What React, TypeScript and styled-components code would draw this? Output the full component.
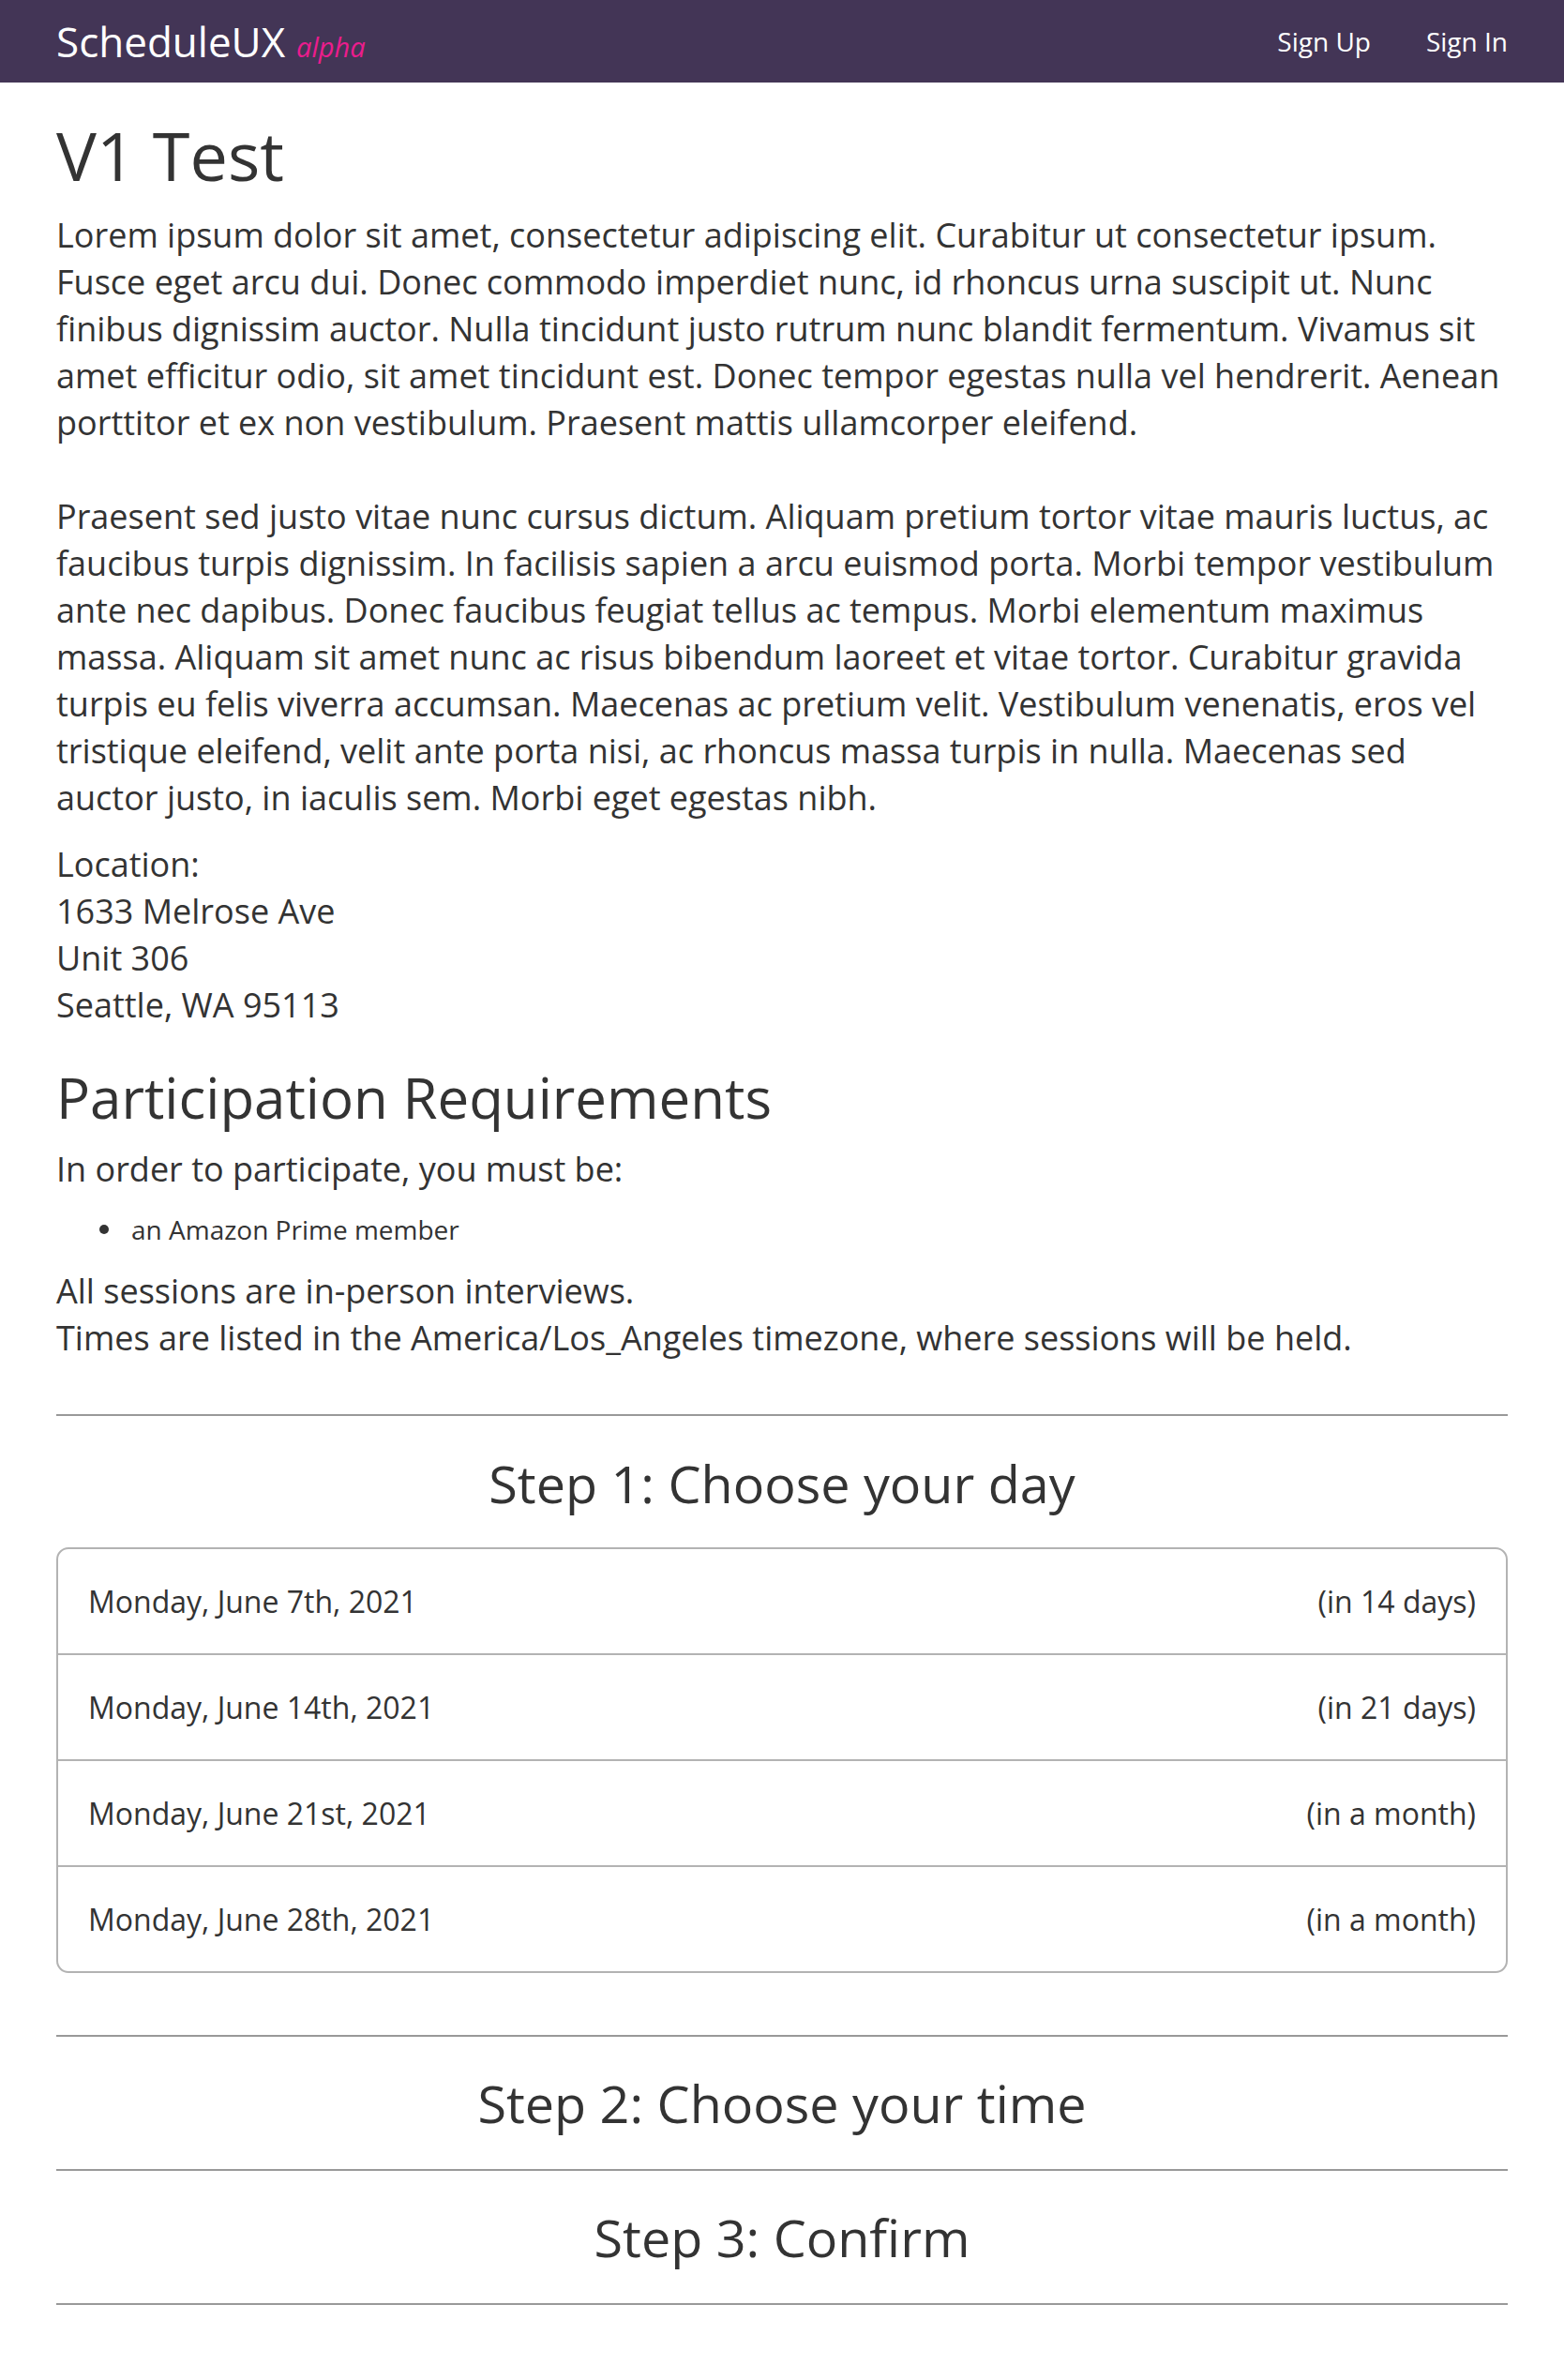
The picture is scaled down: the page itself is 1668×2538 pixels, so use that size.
import React from "react";
import styled, { createGlobalStyle } from "styled-components";

const GlobalStyle = createGlobalStyle`
  html, body { margin: 0; padding: 0; background: #ffffff; }
  body {
    font-family: "Open Sans", "Liberation Sans", sans-serif;
    color: #333333;
    -webkit-font-smoothing: antialiased;
  }
  * { box-sizing: border-box; }
`;

const NavBar = styled.header`
  height: 88px;
  background: #433556;
  display: flex;
  align-items: center;
  justify-content: space-between;
  padding: 0 60px;
`;

const Brand = styled.div`
  display: flex;
  align-items: baseline;
  gap: 12px;
  color: #ffffff;
  font-size: 44px;
  line-height: 1;
`;

const Tag = styled.span`
  color: #ec1c8d;
  font-style: italic;
  font-size: 29px;
`;

const NavLinks = styled.nav`
  display: flex;
  gap: 59px;
`;

const NavLink = styled.a`
  color: #ffffff;
  font-size: 28px;
  text-decoration: none;
`;

const Main = styled.main`
  padding: 0 60px 80px;
`;

const Title = styled.h1`
  margin: 34px 0 0;
  font-size: 72px;
  font-weight: 400;
  line-height: 1.2;
`;

const Text = styled.p<{ $top?: number }>`
  margin: ${(p) => p.$top ?? 18}px 0 0;
  font-size: 36px;
  line-height: 50px;
`;

const SectionTitle = styled.h2`
  margin: 37px 0 0;
  font-size: 60px;
  font-weight: 400;
  line-height: 1.2;
`;

const Bullets = styled.ul`
  margin: 18px 0 0;
  padding-left: 46px;
  list-style: none;
  font-size: 28px;
  line-height: 42px;
`;

const Bullet = styled.li`
  display: flex;
  align-items: center;
  gap: 24px;
  &::before {
    content: "";
    width: 10px;
    height: 10px;
    border-radius: 50%;
    background: #333333;
    flex: none;
  }
`;

const Rule = styled.hr<{ $top: number }>`
  margin: ${(p) => p.$top}px 0 0;
  border: 0;
  border-top: 2px solid #999999;
  height: 0;
`;

const StepTitle = styled.h2<{ $above: number; $below: number }>`
  margin: 0;
  padding: ${(p) => p.$above}px 0 ${(p) => p.$below}px;
  text-align: center;
  font-size: 55.7px;
  font-weight: 400;
  line-height: 1.2;
`;

const DayList = styled.div`
  border: 2px solid #b3b3b3;
  border-radius: 13px;
  overflow: hidden;
`;

const DayRow = styled.div`
  box-sizing: content-box;
  display: flex;
  justify-content: space-between;
  align-items: center;
  height: 111px;
  padding: 0 32px;
  font-size: 32px;
  color: #333333;
  & + & {
    border-top: 2px solid #b3b3b3;
  }
`;

const days = [
  ["Monday, June 7th, 2021", "(in 14 days)"],
  ["Monday, June 14th, 2021", "(in 21 days)"],
  ["Monday, June 21st, 2021", "(in a month)"],
  ["Monday, June 28th, 2021", "(in a month)"],
];

export default function App() {
  return (
    <>
      <GlobalStyle />
      <NavBar>
        <Brand>
          ScheduleUX<Tag>alpha</Tag>
        </Brand>
        <NavLinks>
          <NavLink href="#">Sign Up</NavLink>
          <NavLink href="#">Sign In</NavLink>
        </NavLinks>
      </NavBar>
      <Main>
        <Title>V1 Test</Title>
        <Text>
          Lorem ipsum dolor sit amet, consectetur adipiscing elit. Curabitur ut consectetur ipsum. Fusce eget arcu dui. Donec commodo imperdiet nunc, id rhoncus urna suscipit ut. Nunc finibus dignissim auctor. Nulla tincidunt justo rutrum nunc blandit fermentum. Vivamus sit amet efficitur odio, sit amet tincidunt est. Donec tempor egestas nulla vel hendrerit. Aenean porttitor et ex non vestibulum. Praesent mattis ullamcorper eleifend.
        </Text>
        <Text $top={50}>
          Praesent sed justo vitae nunc cursus dictum. Aliquam pretium tortor vitae mauris luctus, ac faucibus turpis dignissim. In facilisis sapien a arcu euismod porta. Morbi tempor vestibulum ante nec dapibus. Donec faucibus feugiat tellus ac tempus. Morbi elementum maximus massa. Aliquam sit amet nunc ac risus bibendum laoreet et vitae tortor. Curabitur gravida turpis eu felis viverra accumsan. Maecenas ac pretium velit. Vestibulum venenatis, eros vel tristique eleifend, velit ante porta nisi, ac rhoncus massa turpis in nulla. Maecenas sed auctor justo, in iaculis sem. Morbi eget egestas nibh.
        </Text>
        <Text $top={21}>
          Location:
          <br />
          1633 Melrose Ave
          <br />
          Unit 306
          <br />
          Seattle, WA 95113
        </Text>
        <SectionTitle>Participation Requirements</SectionTitle>
        <Text $top={16}>In order to participate, you must be:</Text>
        <Bullets>
          <Bullet>an Amazon Prime member</Bullet>
        </Bullets>
        <Text $top={20}>
          All sessions are in-person interviews.
          <br />
          Times are listed in the America/Los_Angeles timezone, where sessions will be held.
        </Text>
        <Rule $top={56} />
        <StepTitle $above={38} $below={35}>Step 1: Choose your day</StepTitle>
        <DayList>
          {days.map(([d, rel]) => (
            <DayRow key={d}>
              <span>{d}</span>
              <span>{rel}</span>
            </DayRow>
          ))}
        </DayList>
        <Rule $top={66} />
        <StepTitle $above={37} $below={37}>Step 2: Choose your time</StepTitle>
        <Rule $top={0} />
        <StepTitle $above={37} $below={37}>Step 3: Confirm</StepTitle>
        <Rule $top={0} />
      </Main>
    </>
  );
}
